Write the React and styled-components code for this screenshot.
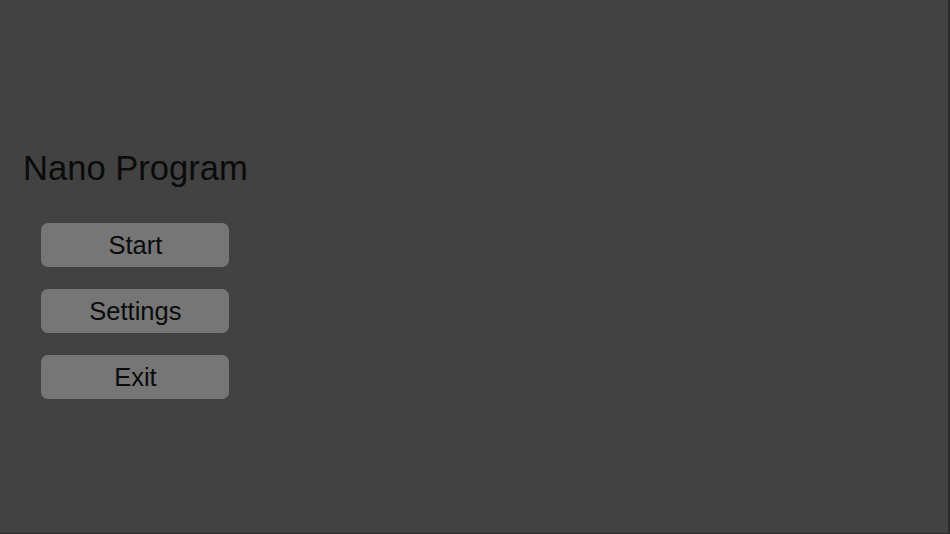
import React from "react";
import styled, { createGlobalStyle } from "styled-components";

const Global = createGlobalStyle`
  html, body { margin: 0; padding: 0; }
  body { background: #414241; font-family: "Liberation Sans", Arial, sans-serif; }
`;

const Screen = styled.div`
  width: 950px;
  height: 534px;
  box-sizing: border-box;
  background: #414241;
  border-right: 2px solid #2b2b2b;
  border-bottom: 1px solid #2b2b2b;
  display: flex;
  align-items: flex-start;
  padding: 148px 0 0 23px;
`;

const Menu = styled.div`
  display: flex;
  flex-direction: column;
  align-items: center;
`;

const Title = styled.h1`
  margin: 0 0 35px;
  font-size: 34.6px;
  line-height: 40px;
  font-weight: normal;
  color: #0b0b0b;
  white-space: nowrap;
`;

const Buttons = styled.div`
  display: flex;
  flex-direction: column;
  gap: 22px;
`;

const MenuButton = styled.button`
  width: 188px;
  height: 44px;
  border: none;
  border-radius: 7px;
  background: #767677;
  color: #0b0b0b;
  font-family: "Liberation Sans", Arial, sans-serif;
  font-size: 25.5px;
  padding: 0;
  cursor: pointer;
`;

export default function App() {
  return (
    <>
      <Global />
      <Screen>
        <Menu>
          <Title>Nano Program</Title>
          <Buttons>
            <MenuButton>Start</MenuButton>
            <MenuButton>Settings</MenuButton>
            <MenuButton>Exit</MenuButton>
          </Buttons>
        </Menu>
      </Screen>
    </>
  );
}
